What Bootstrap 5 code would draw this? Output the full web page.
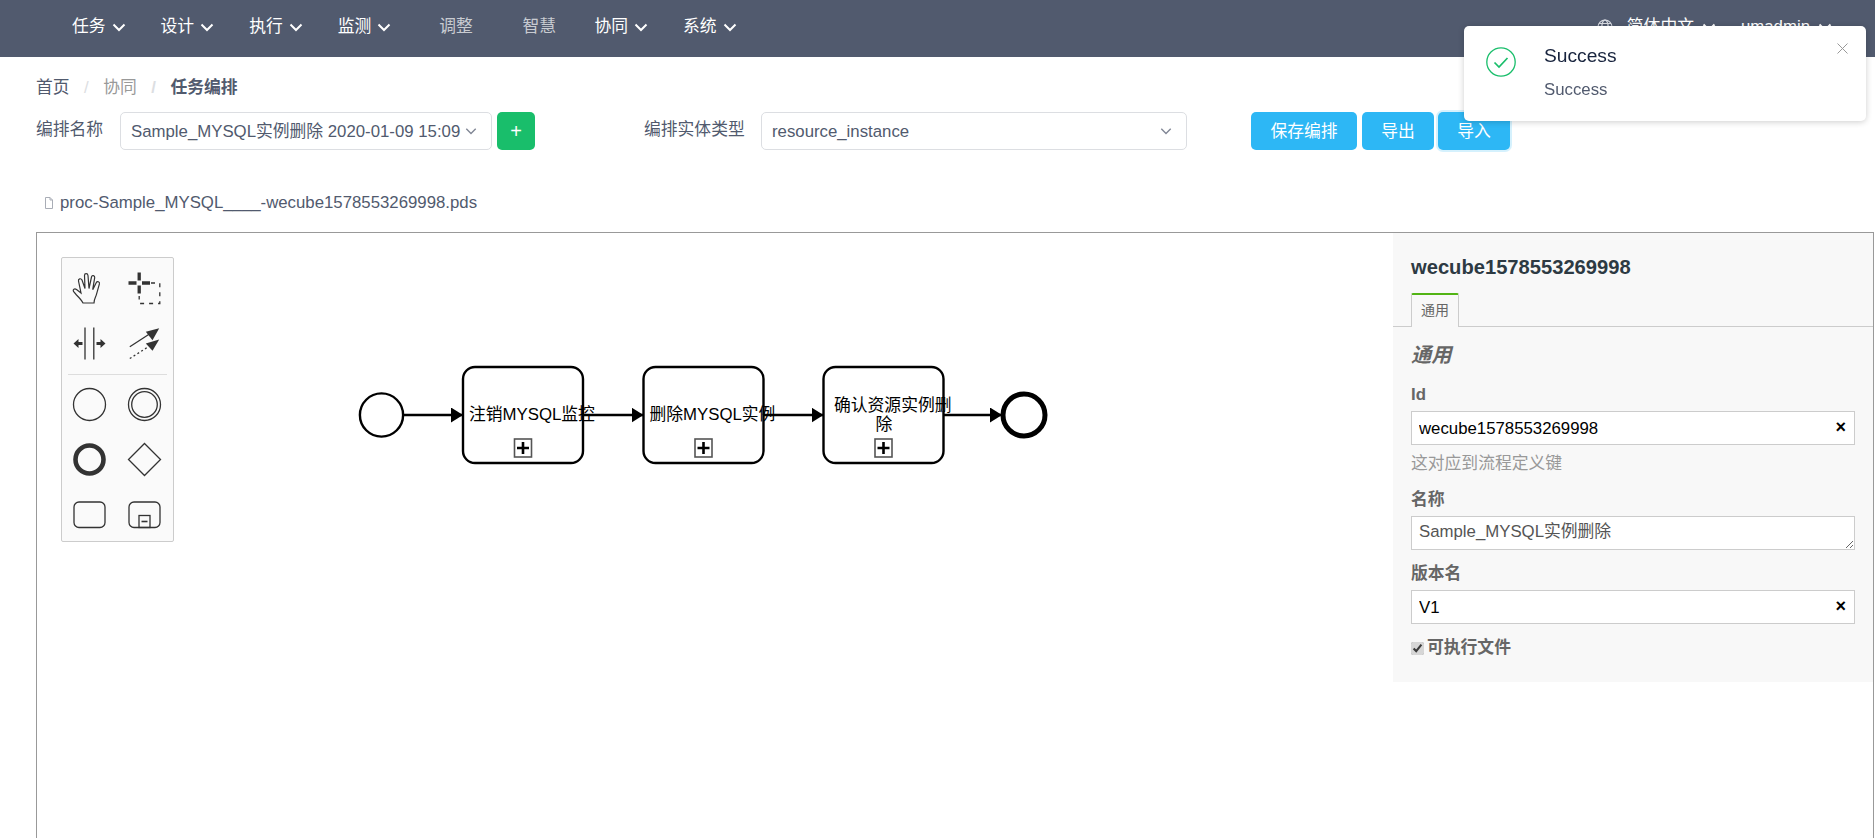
<!DOCTYPE html>
<html lang="zh">
<head>
  <meta charset="UTF-8">
  <title>任务编排</title>
  <link href="https://cdn.jsdelivr.net/npm/bootstrap@5.3.0/dist/css/bootstrap.min.css" rel="stylesheet">
  <style>
    html, body { height: 838px; overflow: hidden; }
    body { font-family: "Liberation Sans", "Noto Sans CJK SC", sans-serif; font-size: 16.8px; color: #515a6e; background: #fff; }
    .top-nav { height: 57px; background: #515a6e; padding: 0 0 0 54.5px; flex-wrap: nowrap; }
    .menu-link { color: #fff; font-size: 16.8px; padding: 0 17.5px; display: flex; align-items: center; gap: 6px; line-height: 53px; height: 53px; text-decoration: none; }
    .menu-plain { color: rgba(255,255,255,.7); padding: 0 24px; }
    .menu-first-plain { margin-left: 6.5px; }
    .menu-last-plain { margin-left: 1.5px; margin-right: -3px; }
    .nav-right { position: absolute; right: 43px; top: 0; height: 53px; color: #fff; gap: 25px; }
    .chev { width: 14px; height: 14px; fill: none; stroke: currentColor; stroke-width: 2; flex: none; }
    .globe { margin-right: 6px; }

    .page-body { padding: 18px 0 0 36px; }
    .crumbs { margin: 0; height: 25px; line-height: 25px; --bs-breadcrumb-divider-color: #dcdee2; --bs-breadcrumb-margin-bottom: 0; --bs-breadcrumb-item-padding-x: 14.5px; font-size: 16.8px; }
    .crumbs a { color: #515a6e; text-decoration: none; }
    .crumbs .crumb-muted a { color: #999; }
    .crumbs .active { color: #515a6e; font-weight: 700; }
    .tool-row { margin-top: 12px; height: 38px; }
    .field-label { width: 84px; flex: none; padding-bottom: 3px; }
    .fake-select { border: 1px solid #dcdee2; border-radius: 5px; height: 38px; color: #515a6e; padding: 2px 14px 0 10px; white-space: nowrap; background: #fff; justify-content: space-between; }
    .fake-select .chev { color: #808695; width: 12px; height: 12px; stroke-width: 1.600; margin-top: -3px; }
    .select-name { width: 372px; }
    .select-type { width: 426px; }
    .type-label { margin-left: 109px; width: 117px; flex: none; white-space: nowrap; padding-bottom: 3px; }
    .btn-add { width: 38px; height: 38px; margin-left: 5px; background: #19be6b; border: 0; border-radius: 5px; color: #fff; padding: 0; font-size: 20px; line-height: 38px; }
    .btn-sky { background: #2db7f5; border: 0; border-radius: 5px; color: #fff; height: 38px; padding: 2px 0 0; font-size: 16.8px; }
    .btn-save { width: 106px; margin-left: 64px; }
    .btn-export { width: 72px; margin-left: 5px; }
    .btn-import { width: 72px; margin-left: 4px; box-shadow: 0 0 0 2px rgba(45,183,245,.2); }
    .file-line { margin-top: 41px; height: 24px; line-height: 24px; padding-left: 9px; gap: 7px; }

    .flow-canvas { position: relative; margin-top: 17px; width: 1838px; height: 640px; border: 1px solid #999; }
    .diagram { position: absolute; left: 0; top: 0; }
    .palette { position: absolute; left: 24px; top: 24px; width: 113px; padding-top: 3px; background: #fafafa; border: 1px solid #ccc; border-radius: 2px; }
    .palette-grid { display: grid; grid-template-columns: 55px 55px; }
    .palette-grid svg { width: 55px; height: 55px; display: block; }
    .palette-sep { height: 1px; margin: 3px 6px 2px; background: #ddd; }
    .palette-sep + .palette-grid { margin-bottom: -1px; }

    .props { width: 480px; height: 449px; margin-left: auto; background: #f8f8f8; padding: 22px 18px 0; font-size: 16.8px; color: #666; }
    .props-title { font-size: 20.16px; font-weight: 700; color: #2d3a43; line-height: 24px; margin: 0 0 14px; }
    .props-tabs { margin: 0 -18px; padding-left: 18px; height: 34px; border-bottom: 1px solid #ccc; }
    .props-tab { width: 48px; height: 34px; border: 1px solid #ccc; border-top: 2px solid #52b415; border-bottom: 0; border-radius: 2px 2px 0 0; font-size: 14px; background: #f8f8f8; color: #666; text-align: center; line-height: 30px; }
    .props-head { font-size: 20.16px; font-weight: 700; font-style: italic; margin: 15px 0 0; line-height: 26px; color: #666; }
    .prop-label { font-weight: 700; line-height: 20px; margin: 0; display: block; }
    .label-id { margin-top: 17px; }
    .prop-box { position: relative; margin-top: 6px; }
    .prop-input { width: 444px; height: 34px; border: 1px solid #ccc; background: #fff; color: #000; padding: 2px 28px 0 7px; font-size: 16.8px; display: block; border-radius: 0; outline: 0; font-family: inherit; }
    .prop-area { color: #555; resize: vertical; line-height: 26px; padding-top: 2px; overflow: hidden; }
    .prop-clear { position: absolute; right: 9px; top: 6px; font-weight: 700; color: #000; font-size: 18px; line-height: 20px; }
    .prop-hint { color: #999; line-height: 20px; margin-top: 9px; }
    .label-name { margin-top: 16px; }
    .label-version { margin-top: 14px; }
    .check-row { margin-top: 14px; gap: 3px; font-weight: 700; line-height: 20px; }
    .check-row input { margin: 0; width: 13px; height: 13px; accent-color: #d6d6d6; }

    .notice { position: fixed; left: 1464px; top: 26px; width: 402px; height: 95px; background: #fff; border-radius: 5px; box-shadow: 0 1px 6px rgba(0,0,0,.2); z-index: 10; }
    .notice-icon { position: absolute; left: 22px; top: 21px; }
    .notice-title { position: absolute; left: 80px; top: 18px; font-size: 19.2px; line-height: 24px; color: #17233d; }
    .notice-text { position: absolute; left: 80px; top: 54px; font-size: 16.8px; line-height: 20px; color: #515a6e; }
    .notice-close { position: absolute; right: 18px; top: 17px; width: 11px; height: 11px; stroke: #999; stroke-width: 1; fill: none; }
    .shape-text { font-size: 16.8px; fill: #000; font-family: "Liberation Sans", "Noto Sans CJK SC", sans-serif; }
  </style>
</head>
<body>
  <svg width="0" height="0" class="position-absolute">
    <symbol id="chevron" viewBox="0 0 14 14"><path d="M1.500 4.500l5.500 5.500 5.500-5.500"/></symbol>
  </svg>

  <nav class="navbar top-nav justify-content-start position-relative">
    <div class="d-flex align-items-start h-100 top-menu">
      <a class="menu-link" href="#">任务 <svg class="chev"><use href="#chevron"/></svg></a>
      <a class="menu-link" href="#">设计 <svg class="chev"><use href="#chevron"/></svg></a>
      <a class="menu-link" href="#">执行 <svg class="chev"><use href="#chevron"/></svg></a>
      <a class="menu-link" href="#">监测 <svg class="chev"><use href="#chevron"/></svg></a>
      <a class="menu-link menu-plain menu-first-plain" href="#">调整</a>
      <a class="menu-link menu-plain menu-last-plain" href="#">智慧</a>
      <a class="menu-link" href="#">协同 <svg class="chev"><use href="#chevron"/></svg></a>
      <a class="menu-link" href="#">系统 <svg class="chev"><use href="#chevron"/></svg></a>
    </div>
    <div class="nav-right d-flex align-items-center">
      <div class="d-flex align-items-center gap-2">
        <svg class="globe" width="16" height="16" viewBox="0 0 16 16" fill="none" stroke="#d8dbe2" stroke-width="1.200"><circle cx="8" cy="8" r="7"/><ellipse cx="8" cy="8" rx="3.200" ry="7"/><path d="M1 8h14M2 4.500h12M2 11.500h12"/></svg>
        <span>简体中文</span>
        <svg class="chev"><use href="#chevron"/></svg>
      </div>
      <div class="d-flex align-items-center gap-2">
        <span>umadmin</span>
        <svg class="chev"><use href="#chevron"/></svg>
      </div>
    </div>
  </nav>

  <main class="page-body">
    <ol class="breadcrumb crumbs">
      <li class="breadcrumb-item"><a href="#">首页</a></li>
      <li class="breadcrumb-item crumb-muted"><a href="#">协同</a></li>
      <li class="breadcrumb-item active">任务编排</li>
    </ol>

    <div class="d-flex align-items-center tool-row">
      <span class="field-label">编排名称</span>
      <div class="fake-select select-name d-flex align-items-center"><span>Sample_MYSQL实例删除 2020-01-09 15:09</span><svg class="chev"><use href="#chevron"/></svg></div>
      <button class="btn btn-add" type="button">+</button>
      <span class="type-label">编排实体类型</span>
      <div class="fake-select select-type d-flex align-items-center"><span>resource_instance</span><svg class="chev"><use href="#chevron"/></svg></div>
      <button class="btn btn-sky btn-save" type="button">保存编排</button>
      <button class="btn btn-sky btn-export" type="button">导出</button>
      <button class="btn btn-sky btn-import" type="button">导入</button>
    </div>

    <div class="file-line d-flex align-items-center">
      <svg width="8" height="12" viewBox="0 0 8 12" fill="none" stroke="#a9adb6"><path d="M.5.5h4.500l2.500 2.500v8.500h-7zM5 .5v2.500h2.500"/></svg>
      <span>proc-Sample_MYSQL____-wecube1578553269998.pds</span>
    </div>

    <div class="flow-canvas d-flex align-items-start">
      <svg class="diagram" width="1356" height="420" viewBox="37 233 1356 420">
        <defs>
          <marker id="arrowEnd" markerUnits="userSpaceOnUse" viewBox="0 0 12 15" refX="12" refY="7.500" markerWidth="12" markerHeight="15" orient="auto"><path d="M0 0L12 7.500L0 15z" fill="#000"/></marker>
        </defs>
        <g fill="none" stroke="#000" stroke-width="2.400">
          <circle cx="381.500" cy="415" r="21.600" fill="#fff"/>
          <rect x="463" y="367" width="120" height="96" rx="12" fill="#fff"/>
          <rect x="643.500" y="367" width="120" height="96" rx="12" fill="#fff"/>
          <rect x="823.500" y="367" width="120" height="96" rx="12" fill="#fff"/>
          <circle cx="1024" cy="415" r="21" stroke-width="5" fill="#fff"/>
          <path d="M403 415H463" marker-end="url(#arrowEnd)"/>
          <path d="M583 415H643.500" marker-end="url(#arrowEnd)"/>
          <path d="M763.500 415H823.500" marker-end="url(#arrowEnd)"/>
          <path d="M943.500 415H1002" marker-end="url(#arrowEnd)"/>
        </g>
        <g fill="none">
          <rect x="514.500" y="439" width="17" height="18" stroke="#555" stroke-width="1.600"/><path d="M517 448h12M523 442v12" stroke="#000" stroke-width="2.600"/>
          <rect x="695" y="439" width="17" height="18" stroke="#555" stroke-width="1.600"/><path d="M697.500 448h12M703.500 442v12" stroke="#000" stroke-width="2.600"/>
          <rect x="875" y="439" width="17" height="18" stroke="#555" stroke-width="1.600"/><path d="M877.500 448h12M883.500 442v12" stroke="#000" stroke-width="2.600"/>
        </g>
        <text class="shape-text" x="469" y="420">注销MYSQL监控</text>
        <text class="shape-text" x="649.500" y="420">删除MYSQL实例</text>
        <text class="shape-text" x="834" y="411">确认资源实例删</text>
        <text class="shape-text" x="884" y="429.500" text-anchor="middle">除</text>
      </svg>

      <div class="palette">
        <div class="palette-grid">
          <svg viewBox="0 0 55 55" fill="none" stroke="#333" stroke-width="1.200"><path d="M21 42c-1.500-3-4-5.500-6.500-8l-3-3.500c-1-2 1-3.500 3-2l4.500 3.500-2.500-12c-.5-2.500 2.500-3 3.500-1l3 8.500-.5-13c0-2.500 3.200-2.500 3.500 0l1 13 2.500-11.500c.5-2.300 3.500-1.500 3.200.7l-2 12 3.500-7c1-2 3.700-1 3.200 1.200l-3 10.800c-.7 2.500-2.300 3.800-2.400 8.300z"/></svg>
          <svg viewBox="0 0 55 55" fill="none"><path d="M11.500 22h8M25 22h8M22.200 11.500v8M22.200 24.500v8" stroke="#333" stroke-width="3.300"/><path d="M34 22h8.800v20.500H22.200V35" stroke="#333" stroke-width="1.300" stroke-dasharray="4 5"/></svg>
          <svg viewBox="0 0 55 55" fill="none"><path d="M23 11.500v32M31.800 11.500v32" stroke="#333" stroke-width="1.300"/><path d="M11.500 27.500l5-4.500v3h4v3h-4v3zM43.500 27.500l-5-4.500v3h-4v3h4v3z" fill="#333"/></svg>
          <svg viewBox="0 0 55 55" fill="none"><path d="M12.800 30.800L34 17" stroke="#333" stroke-width="1.300"/><path d="M42.200 12.200L28.800 15.800 35.500 24.200z" fill="#333"/><path d="M12.800 42.500L31 31" stroke="#333" stroke-width="1.300" stroke-dasharray="2 2.500"/><path d="M42.200 23.500L28.800 27.500 35.500 34.800z" fill="#333"/></svg>
        </div>
        <div class="palette-sep"></div>
        <div class="palette-grid">
          <svg viewBox="0 0 55 55" fill="none" stroke="#333" stroke-width="1.300"><circle cx="27.500" cy="27.500" r="16"/></svg>
          <svg viewBox="0 0 55 55" fill="none" stroke="#333" stroke-width="1.300"><circle cx="27.500" cy="27.500" r="16"/><circle cx="27.500" cy="27.500" r="12.800"/></svg>
          <svg viewBox="0 0 55 55" fill="none" stroke="#333" stroke-width="4.600"><circle cx="27.500" cy="27.500" r="14"/></svg>
          <svg viewBox="0 0 55 55" fill="none" stroke="#333" stroke-width="1.300"><path d="M27.500 11.500l16 16-16 16-16-16z"/></svg>
          <svg viewBox="0 0 55 55" fill="none" stroke="#333" stroke-width="1.300"><rect x="12" y="15" width="31" height="25.500" rx="5"/></svg>
          <svg viewBox="0 0 55 55" fill="none" stroke="#333" stroke-width="1.300"><rect x="12" y="15" width="31" height="25.500" rx="5"/><rect x="22" y="28.500" width="11" height="12"/><path d="M24.500 34.500h6" stroke-width="1.600"/></svg>
        </div>
      </div>

      <aside class="props">
        <h5 class="props-title">wecube1578553269998</h5>
        <div class="props-tabs d-flex"><div class="props-tab">通用</div></div>
        <div class="props-head">通用</div>
        <label class="prop-label label-id">Id</label>
        <div class="prop-box"><input class="prop-input" value="wecube1578553269998"><span class="prop-clear">×</span></div>
        <div class="prop-hint">这对应到流程定义键</div>
        <label class="prop-label label-name">名称</label>
        <div class="prop-box"><textarea class="prop-input prop-area" rows="1">Sample_MYSQL实例删除</textarea></div>
        <label class="prop-label label-version">版本名</label>
        <div class="prop-box"><input class="prop-input" value="V1"><span class="prop-clear">×</span></div>
        <div class="check-row d-flex align-items-center"><input type="checkbox" checked><span>可执行文件</span></div>
      </aside>
    </div>
  </main>

  <div class="notice">
    <svg class="notice-icon" width="30" height="30" viewBox="0 0 30 30" fill="none" stroke="#19be6b"><circle cx="15" cy="15" r="14.200" stroke-width="1.300"/><path d="M8.500 15.500l4.500 4.500 8.500-9" stroke-width="1.700"/></svg>
    <div class="notice-title">Success</div>
    <div class="notice-text">Success</div>
    <svg class="notice-close" viewBox="0 0 11 11"><path d="M.5.5l10 10M10.500.5l-10 10"/></svg>
  </div>

  <script src="https://cdn.jsdelivr.net/npm/bootstrap@5.3.0/dist/js/bootstrap.bundle.min.js"></script>
</body>
</html>
